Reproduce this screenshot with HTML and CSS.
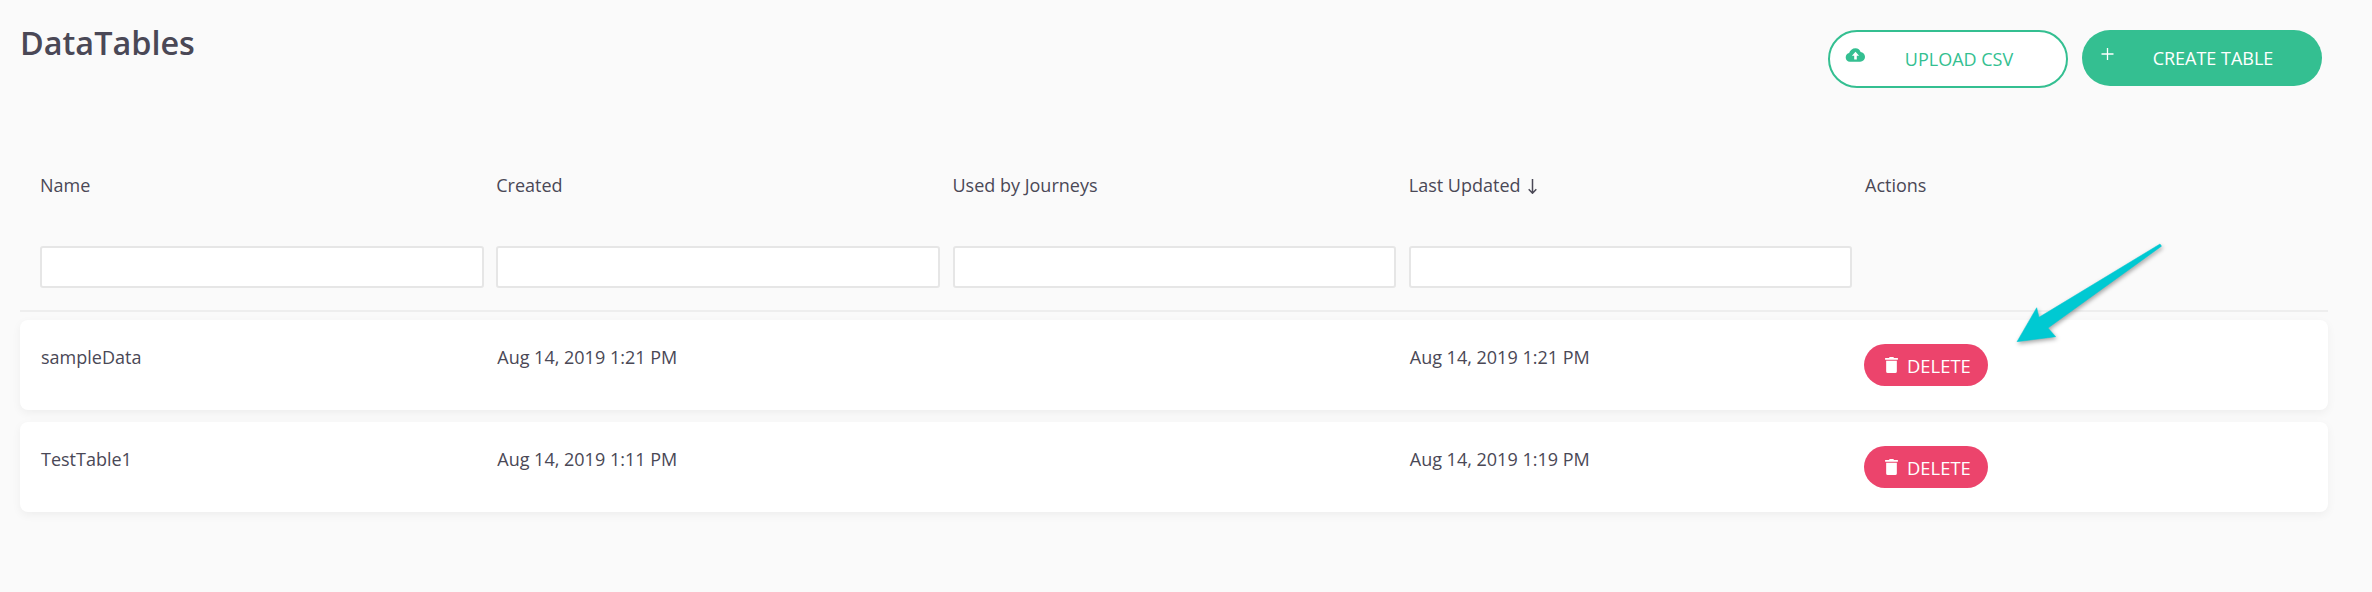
FILE: index.html
```html
<!DOCTYPE html>
<html lang="en">
<head>
<meta charset="utf-8">
<title>DataTables</title>
<link rel="stylesheet" href="styles.css">
</head>
<body>
<main class="page">
  <header class="top">
    <h1 class="title">DataTables</h1>
    <div class="top-actions">
      <button class="btn btn-outline" type="button">
        <svg class="btn-icon cloud" viewBox="0 0 20 14"><path fill="#34bf91" fill-rule="evenodd" d="M10 0.2c2.5 0 4.5 1.6 5.1 3.9 2.4.2 4.4 2.2 4.4 4.7 0 2.7-2.1 4.9-4.8 4.9H4.4C2 13.7.2 11.8.2 9.4c0-2.1 1.400-3.800 3.400-4.300C4.400 2.300 6.900.2 10 .2zM10 3.800 6.400 7.700h2.300v3.700h2.600V7.700h2.300z"/></svg>
        <span class="btn-label">UPLOAD CSV</span>
      </button>
      <button class="btn btn-solid" type="button">
        <svg class="btn-icon plus" viewBox="0 0 12 12"><path d="M6 0v12M0 6h12" stroke="#fff" stroke-width="1.300" fill="none"/></svg>
        <span class="btn-label">CREATE TABLE</span>
      </button>
    </div>
  </header>

  <section class="table">
    <div class="grid head">
      <div>Name</div>
      <div>Created</div>
      <div>Used by Journeys</div>
      <div>Last Updated <svg class="sort" viewBox="0 0 9 15" aria-label="sorted descending"><path d="M4.500 0V14M.7 10.300 4.500 14.200 8.300 10.300" fill="none" stroke="#4a4856" stroke-width="1.500"/></svg></div>
      <div>Actions</div>
    </div>
    <div class="grid filters">
      <input class="filter" type="text" aria-label="Name">
      <input class="filter" type="text" aria-label="Created">
      <input class="filter" type="text" aria-label="Used by Journeys">
      <input class="filter" type="text" aria-label="Last Updated">
    </div>
    <div class="rule"></div>
    <div class="grid row">
      <div class="cell name">sampleData</div>
      <div class="cell">Aug 14, 2019 1:21 PM</div>
      <div class="cell"></div>
      <div class="cell">Aug 14, 2019 1:21 PM</div>
      <div class="action"><button class="delete" type="button"><svg class="trash" viewBox="0 0 12 15"><path fill="#fff" d="M4.200 0h3.600l.5 1H12v1.500H0V1h3.700zM1 3.500h10V13.500a1.500 1.500 0 0 1-1.500 1.500h-7A1.500 1.500 0 0 1 1 13.500z"/></svg>DELETE</button></div>
    </div>
    <div class="grid row">
      <div class="cell name">TestTable1</div>
      <div class="cell">Aug 14, 2019 1:11 PM</div>
      <div class="cell"></div>
      <div class="cell">Aug 14, 2019 1:19 PM</div>
      <div class="action"><button class="delete" type="button"><svg class="trash" viewBox="0 0 12 15"><path fill="#fff" d="M4.200 0h3.600l.5 1H12v1.500H0V1h3.700zM1 3.500h10V13.500a1.500 1.500 0 0 1-1.500 1.500h-7A1.500 1.500 0 0 1 1 13.500z"/></svg>DELETE</button></div>
    </div>
  </section>
</main>
<svg class="arrow" viewBox="0 0 160 112" aria-hidden="true"><path fill="#00c9d2" stroke="#00c9d2" stroke-width=".5" stroke-linejoin="round" d="M150 2 151.500 4.200 38 86 45.700 94.700 7 99.700 26.700 65.700 29 75.300z"/></svg>
</body>
</html>
```
FILE: styles.css
```css
* { box-sizing: border-box; }
html, body { margin: 0; height: 100%; }
body {
  background: #fafafa;
  color: #4a4856;
  font-family: "Open Sans", "Noto Sans", sans-serif;
  font-size: 18px;
  overflow: hidden;
  position: relative;
}
.page { padding: 30px 44px 0 20px; }
.top { display: flex; justify-content: space-between; align-items: flex-start; height: 142px; }
.title { margin: -10px 0 0 0; font-size: 32.400px; font-weight: 600; line-height: 44px; color: #4a4856; }
.top-actions { display: flex; gap: 14px; margin-right: 6px; align-items: flex-start; }
.btn {
  position: relative;
  width: 240px;
  border-radius: 29px;
  font: 400 18px "Open Sans", sans-serif;
  padding: 0;
  display: flex;
  align-items: center;
  justify-content: center;
}
.btn-outline { background: #fff; border: 2px solid #34bf91; color: #34bf91; height: 58px; }
.btn-solid { background: #34bf91; border: 0; color: #fff; height: 56px; }
.btn-label { margin-left: 22px; }
.btn-solid .btn-label { margin-top: -1px; }
.btn-icon { position: absolute; }
.cloud { width: 21px; height: 14px; left: 15px; top: 16px; }
.plus { width: 13px; height: 12px; left: 19px; top: 18px; }
.grid { display: grid; grid-template-columns: repeat(4, 456.25px) 1fr; }
.head { padding-left: 20px; height: 26px; line-height: 26px; }
.sort { width: 9px; height: 15px; margin-left: 3px; vertical-align: -2px; }
.filters { padding-left: 20px; margin-top: 48px; }
.filter {
  width: 443.500px;
  height: 42px;
  background: #fff;
  border: 2px solid #e6e6e6;
  border-radius: 3px;
  display: block;
}
.rule { height: 2px; background: #eeeeee; margin-top: 22px; }
.row {
  background: #fff;
  border-radius: 8px;
  height: 90px;
  margin-top: 8px;
  padding: 24px 0 0 20px;
  line-height: 24px;
  box-shadow: 0 3px 10px rgba(0, 0, 0, .05);
}
.row + .row { margin-top: 12px; }
.cell { padding: 1px 0 0 1px; }
.action { margin-left: -1px; }
.delete {
  height: 42px;
  width: 124px;
  border: 0;
  border-radius: 21px;
  background: #ec446c;
  color: #fff;
  font: 400 18.400px "Open Sans", sans-serif;
  display: flex;
  align-items: center;
  justify-content: flex-start;
  gap: 9px;
  padding: 0 0 0 21px;
}
.trash { width: 13px; height: 16px; }
.arrow {
  position: absolute;
  left: 2010px;
  top: 242px;
  width: 160px;
  height: 112px;
  filter: drop-shadow(1px 2px 2px rgba(0, 0, 0, .35));
}
```
